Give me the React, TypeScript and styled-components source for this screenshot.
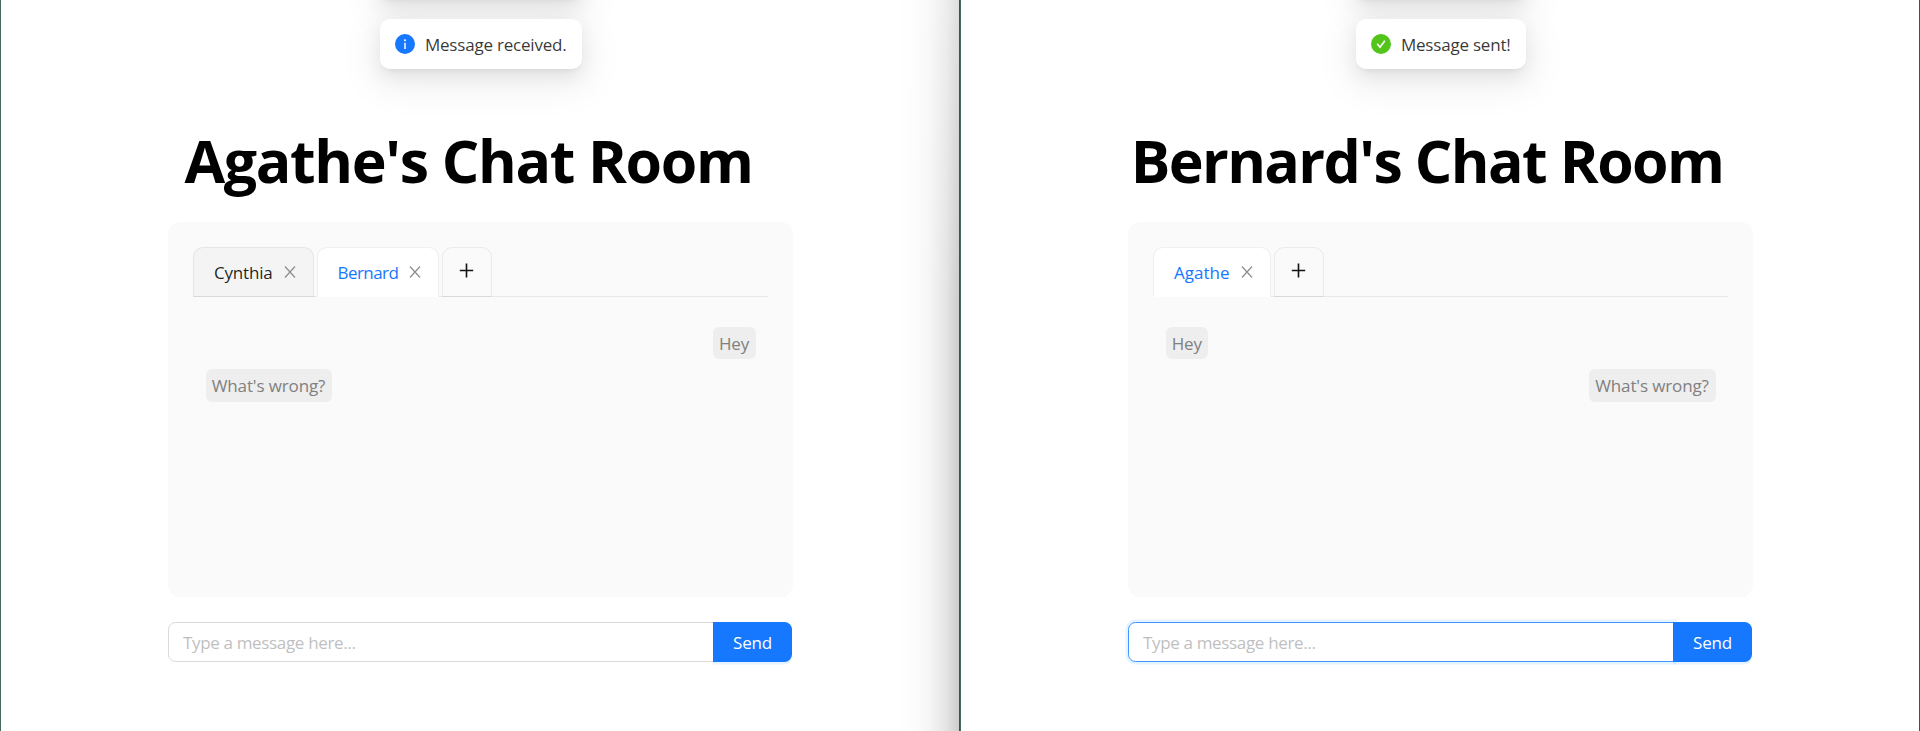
import React from "react";
import styled, { createGlobalStyle, css } from "styled-components";

const GlobalStyle = createGlobalStyle`
  *, *::before, *::after { box-sizing: border-box; }
  body {
    margin: 0;
    background: #fff;
    font-family: "Open Sans", "Noto Sans", sans-serif;
    font-size: 17px;
    font-weight: 400;
    letter-spacing: -0.2px;
    color: rgba(0, 0, 0, 0.8);
  }
`;

const Screen = styled.div`
  display: grid;
  grid-template-columns: 960px 960px;
  height: 731px;
  overflow: hidden;
`;

const Pane = styled.section<{ $shaded?: boolean }>`
  position: relative;
  overflow: hidden;
  height: 731px;
  padding: 127px 0 0 167px;
  border-left: 1px solid #426b60;
  border-right: 1px solid #36574e;
  background: #fff;
  ${(p) =>
    p.$shaded &&
    css`
      &::after {
        content: "";
        position: absolute;
        top: 0;
        right: 0;
        width: 60px;
        height: 100%;
        pointer-events: none;
        background: linear-gradient(
          to right,
          rgba(0, 0, 0, 0) 0%,
          rgba(0, 0, 0, 0.01) 25%,
          rgba(0, 0, 0, 0.035) 50%,
          rgba(0, 0, 0, 0.1) 78%,
          rgba(0, 0, 0, 0.2) 100%
        );
        mask-image: linear-gradient(to bottom, rgba(0, 0, 0, 0.65) 0, #000 300px);
      }
    `}
`;

const ToastStack = styled.div`
  position: absolute;
  top: -51px;
  left: 1px;
  right: 0;
  display: flex;
  flex-direction: column;
  align-items: center;
  gap: 20px;
`;

const Toast = styled.div<{ $width: number }>`
  display: flex;
  align-items: center;
  gap: 10.4px;
  width: ${(p) => p.$width}px;
  height: 50px;
  padding: 0 15px;
  border-radius: 10px;
  background: #fff;
  white-space: nowrap;
  box-shadow:
    0 7.5px 20px 0 rgba(0, 0, 0, 0.08),
    0 3.75px 7.5px -5px rgba(0, 0, 0, 0.12),
    0 11.25px 35px 10px rgba(0, 0, 0, 0.05);
  svg { flex: none; }
`;

const Title = styled.h1<{ $spacing: number; $width: number }>`
  margin: 0;
  width: ${(p) => p.$width}px;
  height: 95px;
  line-height: 66px;
  text-align: center;
  font-size: 59px;
  font-weight: 700;
  letter-spacing: ${(p) => p.$spacing}px;
  color: #000;
  white-space: nowrap;
`;

const Card = styled.div`
  width: 625px;
  height: 375px;
  padding: 25px;
  border-radius: 12px;
  background: #fafafa;
`;

const TabBar = styled.div`
  display: flex;
  gap: 2.5px;
  height: 50px;
  box-shadow: inset 0 -1px 0 #e8e8e8;
`;

const Tab = styled.div<{ $active?: boolean; $width: number; $spacing: number }>`
  display: flex;
  align-items: center;
  justify-content: space-between;
  width: ${(p) => p.$width}px;
  padding: 0 17.5px 0 20px;
  border: 1px solid ${(p) => (p.$active ? "#f0f0f0" : "#e6e6e6")};
  border-bottom-color: ${(p) => (p.$active ? "#fff" : "#d8d8d8")};
  border-radius: 10px 10px 0 0;
  background: ${(p) => (p.$active ? "#fff" : "#f4f4f4")};
  color: ${(p) => (p.$active ? "#1677ff" : "rgba(0, 0, 0, 0.88)")};
  letter-spacing: ${(p) => p.$spacing}px;
`;

const AddTab = styled.div`
  display: flex;
  justify-content: center;
  width: 50px;
  padding-top: 15px;
  border: 1px solid #ebebeb;
  border-bottom-color: #d8d8d8;
  border-radius: 10px 10px 0 0;
`;

const Messages = styled.div`
  display: flex;
  flex-direction: column;
  gap: 10px;
  padding: 30px 12.5px;
`;

const Bubble = styled.div<{ $mine?: boolean; $width: number }>`
  align-self: ${(p) => (p.$mine ? "flex-end" : "flex-start")};
  width: ${(p) => p.$width}px;
  height: 32.4px;
  line-height: 33px;
  border-radius: 6px;
  background: #eee;
  color: #808080;
  text-align: center;
  letter-spacing: -0.12px;
  white-space: nowrap;
`;

const Composer = styled.div`
  display: flex;
  width: 624px;
  height: 40px;
  margin-top: 25px;
`;

const Field = styled.input<{ $focused?: boolean }>`
  width: 546px;
  margin-right: -1px;
  padding: 1px 14px 0;
  border: 1px solid ${(p) => (p.$focused ? "#4096ff" : "#d9d9d9")};
  border-radius: 7.5px 0 0 7.5px;
  outline: 0;
  background: #fff;
  font: inherit;
  letter-spacing: -0.34px;
  box-shadow: ${(p) => (p.$focused ? "0 0 0 2.5px rgba(5, 145, 255, 0.1)" : "none")};
  &::placeholder { color: #bfbfbf; opacity: 1; }
`;

const SendButton = styled.button`
  width: 79px;
  padding: 0;
  border: 0;
  border-radius: 0 7.5px 7.5px 0;
  background: #1677ff;
  color: #fff;
  font: inherit;
  letter-spacing: inherit;
  box-shadow: 0 2.5px 0 rgba(5, 145, 255, 0.1);
`;

const InfoIcon = () => (
  <svg width="20" height="20" viewBox="0 0 20 20">
    <circle cx="10" cy="10" r="10" fill="#1677ff" />
    <circle cx="10" cy="6.2" r="1.05" fill="#fff" />
    <path d="M10 8.7v6.3" stroke="#fff" strokeWidth="1.5" />
  </svg>
);

const SuccessIcon = () => (
  <svg width="20" height="20" viewBox="0 0 20 20">
    <circle cx="10" cy="10" r="10" fill="#52c41a" />
    <path d="M6.2 9.8l2.8 3.4 4.8-6.5" stroke="#fff" strokeWidth="1.6" fill="none" />
  </svg>
);

const CloseGlyph = styled.svg`
  flex: none;
  margin-bottom: 1px;
`;

const CloseIcon = () => (
  <CloseGlyph width="12" height="12" viewBox="0 0 12 12">
    <path d="M1 .5l10 11M11 .5L1 11.5" stroke="#8c8c8c" strokeWidth="1.2" />
  </CloseGlyph>
);

const PlusIcon = () => (
  <svg width="15" height="15" viewBox="0 0 15 15">
    <path d="M7.5 .5v14M.8 7.5h13.4" stroke="#111" strokeWidth="1.6" />
  </svg>
);

type Room = {
  title: string;
  titleSpacing: number;
  titleWidth: number;
  toast: string;
  toastWidth: number;
  icon: React.ReactNode;
  tabs: { name: string; width: number; spacing: number; active?: boolean }[];
  messages: { text: string; width: number; mine?: boolean }[];
  shaded?: boolean;
  focused?: boolean;
};

const rooms: Room[] = [
  {
    title: "Agathe's Chat Room",
    titleSpacing: -1.33,
    titleWidth: 601,
    toast: "Message received.",
    toastWidth: 202,
    icon: <InfoIcon />,
    tabs: [
      { name: "Cynthia", width: 121, spacing: -0.2 },
      { name: "Bernard", width: 122.5, spacing: -0.55, active: true },
    ],
    messages: [
      { text: "Hey", width: 43, mine: true },
      { text: "What's wrong?", width: 126 },
    ],
    shaded: true,
  },
  {
    title: "Bernard's Chat Room",
    titleSpacing: -1.6,
    titleWidth: 598,
    toast: "Message sent!",
    toastWidth: 170,
    icon: <SuccessIcon />,
    tabs: [{ name: "Agathe", width: 118, spacing: 0, active: true }],
    messages: [
      { text: "Hey", width: 42.5 },
      { text: "What's wrong?", width: 127, mine: true },
    ],
    focused: true,
  },
];

const ChatRoom = ({ room }: { room: Room }) => (
  <Pane $shaded={room.shaded}>
    <ToastStack>
      <Toast $width={room.toastWidth} />
      <Toast $width={room.toastWidth}>
        {room.icon}
        <span>{room.toast}</span>
      </Toast>
    </ToastStack>
    <Title $spacing={room.titleSpacing} $width={room.titleWidth}>
      {room.title}
    </Title>
    <Card>
      <TabBar>
        {room.tabs.map((tab) => (
          <Tab key={tab.name} $width={tab.width} $spacing={tab.spacing} $active={tab.active}>
            {tab.name}
            <CloseIcon />
          </Tab>
        ))}
        <AddTab>
          <PlusIcon />
        </AddTab>
      </TabBar>
      <Messages>
        {room.messages.map((m) => (
          <Bubble key={m.text} $width={m.width} $mine={m.mine}>
            {m.text}
          </Bubble>
        ))}
      </Messages>
    </Card>
    <Composer>
      <Field placeholder="Type a message here..." $focused={room.focused} />
      <SendButton>Send</SendButton>
    </Composer>
  </Pane>
);

export default function App() {
  return (
    <>
      <GlobalStyle />
      <Screen>
        {rooms.map((room) => (
          <ChatRoom key={room.title} room={room} />
        ))}
      </Screen>
    </>
  );
}
